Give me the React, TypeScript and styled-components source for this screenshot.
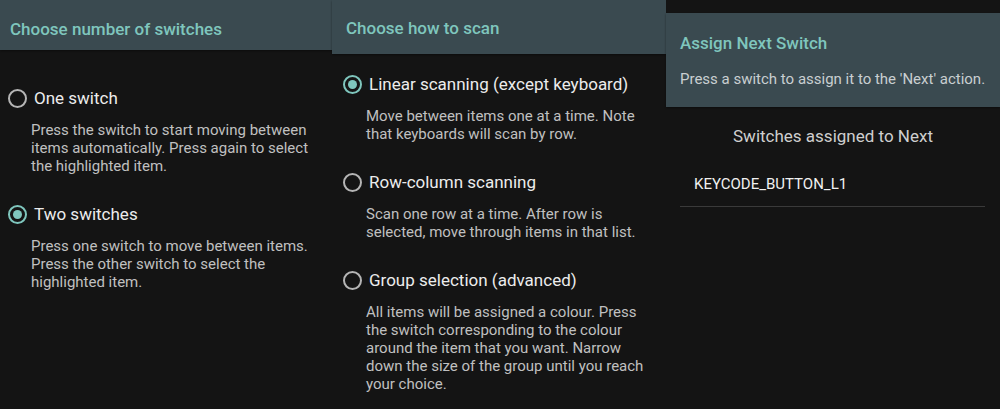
import React from "react";
import styled, { createGlobalStyle } from "styled-components";

const Global = createGlobalStyle`
  html, body { margin: 0; padding: 0; background: #141414; }
  body { font-family: Roboto, "Noto Sans", sans-serif; -webkit-font-smoothing: antialiased; }
`;

const Page = styled.div`
  display: flex;
  width: 1000px;
  height: 409px;
  overflow: hidden;
  background: #141414;
`;

const Panel = styled.section<{ $w: number; $top?: number }>`
  width: ${(p) => p.$w}px;
  flex: none;
  display: flex;
  flex-direction: column;
  padding-top: ${(p) => p.$top ?? 0}px;
  background: #141414;
`;

const Header = styled.header<{ $h: number; $px: number; $pt: number }>`
  height: ${(p) => p.$h}px;
  box-sizing: border-box;
  background: #3a4a50;
  padding: ${(p) => p.$pt}px ${(p) => p.$px}px 0;
  display: flex;
  flex-direction: column;
  gap: 17px;
  box-shadow: 0 1px 2px rgba(0, 0, 0, 0.4);
`;

const Title = styled.h2`
  margin: 0;
  font-size: 17px;
  font-weight: 500;
  color: #7fc6bd;
  line-height: 20px;
`;

const Subtitle = styled.p`
  margin: 0;
  font-size: 15px;
  color: #c9cfd1;
  line-height: 18px;
`;

const Body = styled.div<{ $pt: number; $pl: number }>`
  display: flex;
  flex-direction: column;
  gap: 27px;
  padding: ${(p) => p.$pt}px 4px 0 ${(p) => p.$pl}px;
`;

const Option = styled.div`
  display: flex;
  flex-direction: column;
`;

const RadioRow = styled.label`
  display: flex;
  align-items: center;
  height: 24px;
  gap: 7px;
`;

const Ring = styled.span<{ $on: boolean }>`
  width: 19px;
  height: 19px;
  box-sizing: border-box;
  border-radius: 50%;
  border: 2px solid ${(p) => (p.$on ? "#7fc6bd" : "#b5b5b5")};
  display: flex;
  align-items: center;
  justify-content: center;
  flex: none;
  &::after {
    content: "";
    display: ${(p) => (p.$on ? "block" : "none")};
    width: 9px;
    height: 9px;
    border-radius: 50%;
    background: #7fc6bd;
  }
`;

const Label = styled.span`
  font-size: 17px;
  color: #ececec;
  line-height: 20px;
`;

const Desc = styled.p`
  margin: 11px 0 0 23px;
  font-size: 15px;
  line-height: 18px;
  color: #c0c0c0;
  white-space: nowrap;
`;

const AssignedHead = styled.div`
  margin-top: 19px;
  text-align: center;
  font-size: 17px;
  line-height: 20px;
  color: #cfcfcf;
`;

const List = styled.div`
  padding: 0 15px 0 14px;
  margin-top: 28px;
`;

const ListItem = styled.div`
  padding: 0 0 12px 14px;
  font-size: 15px;
  line-height: 20px;
  color: #f0f0f0;
  border-bottom: 1px solid #3a3a3a;
`;

type Opt = { label: string; desc: string[]; on: boolean };

const RadioOption = ({ o }: { o: Opt }) => (
  <Option>
    <RadioRow>
      <Ring $on={o.on} />
      <Label>{o.label}</Label>
    </RadioRow>
    <Desc>
      {o.desc.map((l, i) => (
        <React.Fragment key={i}>
          {l}
          {i < o.desc.length - 1 && <br />}
        </React.Fragment>
      ))}
    </Desc>
  </Option>
);

const switchOpts: Opt[] = [
  {
    label: "One switch",
    on: false,
    desc: [
      "Press the switch to start moving between",
      "items automatically. Press again to select",
      "the highlighted item.",
    ],
  },
  {
    label: "Two switches",
    on: true,
    desc: [
      "Press one switch to move between items.",
      "Press the other switch to select the",
      "highlighted item.",
    ],
  },
];

const scanOpts: Opt[] = [
  {
    label: "Linear scanning (except keyboard)",
    on: true,
    desc: ["Move between items one at a time. Note", "that keyboards will scan by row."],
  },
  {
    label: "Row-column scanning",
    on: false,
    desc: ["Scan one row at a time. After row is", "selected, move through items in that list."],
  },
  {
    label: "Group selection (advanced)",
    on: false,
    desc: [
      "All items will be assigned a colour. Press",
      "the switch corresponding to the colour",
      "around the item that you want. Narrow",
      "down the size of the group until you reach",
      "your choice.",
    ],
  },
];

export default function App() {
  return (
    <>
      <Global />
      <Page>
        <Panel $w={332}>
          <Header $h={50} $px={10} $pt={19}>
            <Title>Choose number of switches</Title>
          </Header>
          <Body $pt={36} $pl={8}>
            {switchOpts.map((o) => (
              <RadioOption key={o.label} o={o} />
            ))}
          </Body>
        </Panel>
        <Panel $w={334}>
          <Header $h={54} $px={14} $pt={18}>
            <Title>Choose how to scan</Title>
          </Header>
          <Body $pt={18} $pl={11}>
            {scanOpts.map((o) => (
              <RadioOption key={o.label} o={o} />
            ))}
          </Body>
        </Panel>
        <Panel $w={334} $top={13}>
          <Header $h={94} $px={14} $pt={20}>
            <Title>Assign Next Switch</Title>
            <Subtitle>Press a switch to assign it to the 'Next' action.</Subtitle>
          </Header>
          <AssignedHead>Switches assigned to Next</AssignedHead>
          <List>
            <ListItem>KEYCODE_BUTTON_L1</ListItem>
          </List>
        </Panel>
      </Page>
    </>
  );
}
